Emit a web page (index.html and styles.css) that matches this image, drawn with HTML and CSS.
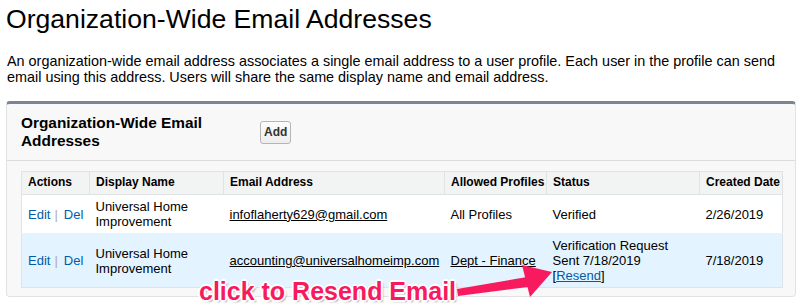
FILE: index.html
```html
<!DOCTYPE html>
<html>
<head>
<meta charset="utf-8">
<link rel="stylesheet" href="styles.css">
</head>
<body>
<h1 class="page-title">Organization-Wide Email Addresses</h1>
<p class="desc">An organization-wide email address associates a single email address to a user profile. Each user in the profile can send email using this address. Users will share the same display name and email address.</p>

<div class="block">
  <div class="block-head">
    <h2 class="block-title">Organization-Wide Email Addresses</h2>
    <button class="btn">Add</button>
  </div>
  <div class="block-body">
    <table class="list">
      <colgroup>
        <col class="c-actions"><col class="c-name"><col class="c-email"><col class="c-prof"><col class="c-status"><col class="c-date">
      </colgroup>
      <thead>
        <tr>
          <th>Actions</th><th>Display Name</th><th>Email Address</th><th>Allowed Profiles</th><th>Status</th><th>Created Date</th>
        </tr>
      </thead>
      <tbody>
        <tr>
          <td class="actions"><a class="act" href="#">Edit</a><span class="pipe">|</span><a class="act" href="#">Del</a></td>
          <td>Universal Home Improvement</td>
          <td><a class="data" href="#">infoflaherty629@gmail.com</a></td>
          <td>All Profiles</td>
          <td>Verified</td>
          <td>2/26/2019</td>
        </tr>
        <tr class="hl">
          <td class="actions"><a class="act" href="#">Edit</a><span class="pipe">|</span><a class="act" href="#">Del</a></td>
          <td>Universal Home Improvement</td>
          <td><a class="data" href="#">accounting@universalhomeimp.com</a></td>
          <td><a class="data" href="#">Dept - Finance</a></td>
          <td>Verification Request Sent 7/18/2019<br>[<a class="act ul" href="#">Resend</a>]</td>
          <td>7/18/2019</td>
        </tr>
      </tbody>
    </table>
  </div>
</div>

<svg class="arrow" width="807" height="307" viewBox="0 0 807 307">
  <polygon points="457,289 527,277 528,287 458,296" fill="#f81a5f"/>
  <polygon points="552,272 522,265 530,297" fill="#f81a5f"/>
</svg>
<div class="callout">click to Resend Email</div>
</body>
</html>
```

FILE: styles.css
```css
html, body {
  margin: 0;
  padding: 0;
}
body {
  padding: 0 11px 0 6px;
  font-family: "Liberation Sans", Arial, sans-serif;
  color: #000;
  background: #fff;
}
.page-title {
  font-size: 26.6px;
  font-weight: normal;
  line-height: 30px;
  margin: 4px 0 0 0;
}
.desc {
  font-size: 14.4px;
  line-height: 16px;
  margin: 19px 0 0 1px;
}
.block {
  margin-top: 16px;
  background: #f8f8f8;
  border: 1px solid #e0e3e5;
  border-top: 3px solid #7b8496;
  border-radius: 4px;
}
.block-head {
  display: flex;
  align-items: center;
  padding: 10px 14px;
  border-bottom: 1px solid #dcdcdc;
}
.block-title {
  width: 239px;
  margin: 0;
  font-size: 15.4px;
  line-height: 18px;
  font-weight: bold;
  color: #000;
}
.btn {
  font-family: "Liberation Sans", Arial, sans-serif;
  font-size: 12px;
  font-weight: bold;
  line-height: 15px;
  color: #333;
  padding: 3px 3px;
  border: 1px solid #b5b5b5;
  border-radius: 3px;
  background: linear-gradient(#fdfdfd, #ededed);
}
.block-body {
  padding: 10px 14px 8px 14px;
}
.list {
  width: 100%;
  table-layout: fixed;
  border-collapse: collapse;
  border: 1px solid #e0e3e5;
  background: #fff;
}
.c-actions { width: 68px; }
.c-name { width: 134px; }
.c-email { width: 221px; }
.c-prof { width: 102px; }
.c-status { width: 153px; }
.c-date { width: 83px; }
.list th {
  background: #f2f3f3;
  border: 1px solid #e0e3e5;
  font-size: 12px;
  font-weight: bold;
  line-height: 15px;
  padding: 3px 6px 4px 6px;
  text-align: left;
  white-space: nowrap;
}
.list td {
  font-size: 13px;
  line-height: 15px;
  padding: 4px 6px;
  vertical-align: middle;
  border-top: 1px solid #ececec;
}
.list tr.hl td {
  background: #e3f3ff;
  border-top: 1px solid #e3f3ff;
}
.actions {
  white-space: nowrap;
}
.act {
  color: #015ba7;
  text-decoration: none;
}
.act.ul {
  text-decoration: underline;
}
.pipe {
  color: #b2aaaa;
  margin: 0 6px 0 4px;
}
.data {
  color: #000;
  text-decoration: underline;
}
.arrow {
  position: absolute;
  left: 0;
  top: 0;
  pointer-events: none;
}
.callout {
  position: absolute;
  left: 199px;
  top: 279px;
  font-family: "Liberation Sans", Arial, sans-serif;
  font-weight: bold;
  font-size: 25px;
  line-height: 25px;
  color: #f81a5f;
  white-space: nowrap;
  text-shadow:
    -2px 0 0 #fff, 2px 0 0 #fff, 0 -2px 0 #fff, 0 2px 0 #fff,
    -1px -1px 0 #fff, 1px 1px 0 #fff, -1px 1px 0 #fff, 1px -1px 0 #fff,
    2px 2px 2px rgba(0,0,0,0.35);
}
```
